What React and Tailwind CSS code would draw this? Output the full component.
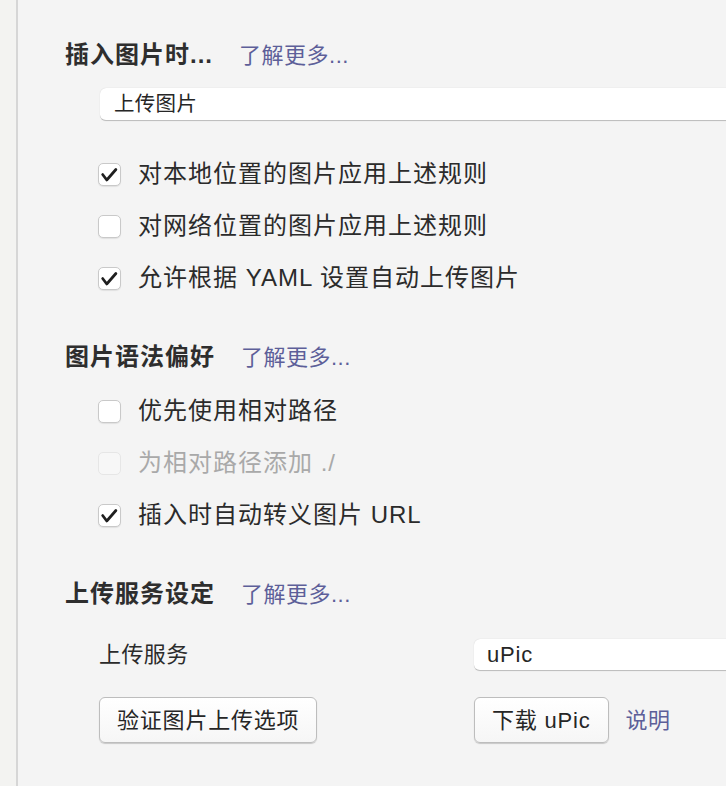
import { useState } from "react";

const font = { fontFamily: '"Liberation Sans", "Noto Sans CJK SC", sans-serif' };

function Heading({ title }) {
  return (
    <div className="flex items-center h-[32px] pl-[47px]">
      <span className="text-[24px] font-bold text-[#2e2e2e] tracking-[1px]">{title}</span>
      <a className="ml-[26px] text-[22px] text-[#5d5f99] tracking-[0.5px] cursor-pointer">了解更多...</a>
    </div>
  );
}

function Check({ label, checked, disabled, onToggle }) {
  return (
    <div
      className="flex items-center h-[52px] pl-[80px] cursor-default select-none"
      onClick={disabled ? undefined : onToggle}
    >
      <div
        className={
          "w-[23px] h-[23px] rounded-[5px] border flex items-center justify-center " +
          (disabled
            ? "bg-[#f7f7f7] border-[#e6e6e6]"
            : "bg-white border-[#c9c9c9] shadow-[0_1px_1px_rgba(0,0,0,0.08)]")
        }
      >
        {checked && (
          <svg width="23" height="23" viewBox="0 0 23 23">
            <path
              d="M4 11.5 L8.5 17.5 L18.5 6"
              fill="none"
              stroke="#1f1f1f"
              strokeWidth="3"
              strokeLinecap="round"
              strokeLinejoin="round"
            />
          </svg>
        )}
      </div>
      <span
        className={
          "ml-[17px] text-[24px] tracking-[1px] " +
          (disabled ? "text-[#a9a9a9]" : "text-[#2b2b2b]")
        }
      >
        {label}
      </span>
    </div>
  );
}

function Button({ children }) {
  return (
    <button className="h-[46px] px-[17px] rounded-[6px] border border-[#bdbdbd] bg-gradient-to-b from-white to-[#f6f6f6] shadow-[0_1px_1px_rgba(0,0,0,0.18)] text-[22px] tracking-[0.8px] text-[#262626]">
      {children}
    </button>
  );
}

export default function App() {
  const [opts, setOpts] = useState({
    local: true,
    web: false,
    yaml: true,
    relative: false,
    dot: false,
    escape: true,
  });

  function toggle(k) {
    setOpts((o) => ({ ...o, [k]: !o[k] }));
  }

  return (
    <div className="flex w-[726px] h-[786px] overflow-hidden bg-[#f4f4f4]" style={font}>
      <div className="w-[16px] shrink-0 bg-[#f3f3f1]" />
      <div className="w-[2px] shrink-0 bg-[#d6d6d6]" />

      <div className="flex-1 min-w-0 pt-[39px]">
        <Heading title="插入图片时..." />

        <div className="mt-[17px] ml-[82px] h-[33px] -mr-[20px] bg-white rounded-[6px] border-b border-[#bfbfbf] shadow-[0_0_1px_rgba(0,0,0,0.2)] flex items-center pl-[14px] text-[20.5px] tracking-[0.3px] text-[#262626]">
          上传图片
        </div>

        <div className="mt-[27px]">
          <Check label="对本地位置的图片应用上述规则" checked={opts.local} onToggle={() => toggle("local")} />
          <Check label="对网络位置的图片应用上述规则" checked={opts.web} onToggle={() => toggle("web")} />
          <Check label="允许根据 YAML 设置自动上传图片" checked={opts.yaml} onToggle={() => toggle("yaml")} />
        </div>

        <div className="mt-[37px]">
          <Heading title="图片语法偏好" />
        </div>

        <div className="mt-[12px]">
          <Check label="优先使用相对路径" checked={opts.relative} onToggle={() => toggle("relative")} />
          <Check label="为相对路径添加 ./" checked={opts.dot} disabled />
          <Check label="插入时自动转义图片 URL" checked={opts.escape} onToggle={() => toggle("escape")} />
        </div>

        <div className="mt-[37px]">
          <Heading title="上传服务设定" />
        </div>

        <div className="mt-[28px] ml-[81px] grid grid-cols-[375px_1fr] items-center">
          <span className="text-[22px] tracking-[0.4px] text-[#2b2b2b]">上传服务</span>
          <div className="h-[32px] -mr-[20px] bg-white rounded-[6px] border-b border-[#bfbfbf] shadow-[0_0_1px_rgba(0,0,0,0.2)] flex items-center pl-[13px] text-[22px] tracking-[0.8px] text-[#262626]">
            uPic
          </div>
        </div>

        <div className="mt-[26px] ml-[81px] grid grid-cols-[375px_1fr] items-center">
          <div>
            <Button>验证图片上传选项</Button>
          </div>
          <div className="flex items-center">
            <Button>下载 uPic</Button>
            <a className="ml-[17px] text-[22px] tracking-[0.5px] text-[#5d5f99] cursor-pointer">说明</a>
          </div>
        </div>
      </div>
    </div>
  );
}
